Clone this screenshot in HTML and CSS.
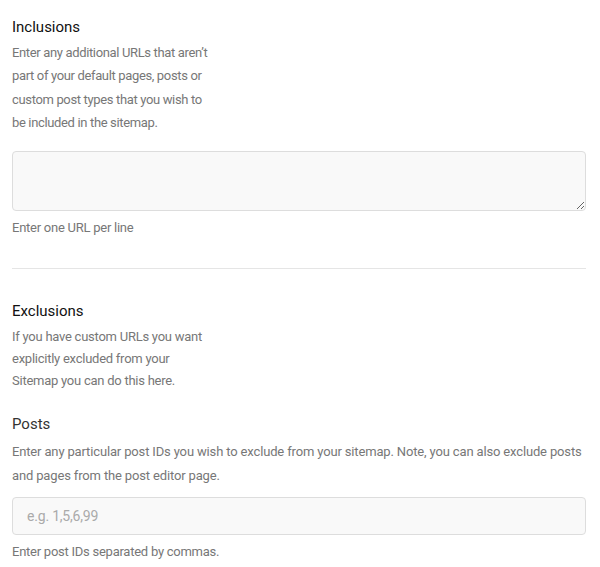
FILE: index.html
```html
<!DOCTYPE html>
<html>
<head>
<meta charset="utf-8">
<link rel="stylesheet" href="styles.css">
</head>
<body>
<div class="page">
  <section class="section">
    <h2 class="title">Inclusions</h2>
    <p class="desc desc-inc">Enter any additional URLs that aren’t part of your default pages, posts or custom post types that you wish to be included in the sitemap.</p>
    <textarea class="textarea"></textarea>
    <p class="help">Enter one URL per line</p>
  </section>
  <hr class="divider">
  <section class="section">
    <h2 class="title">Exclusions</h2>
    <p class="desc desc-exc">If you have custom URLs you want explicitly excluded from your Sitemap you can do this here.</p>
    <h3 class="subtitle">Posts</h3>
    <p class="desc desc-posts">Enter any particular post IDs you wish to exclude from your sitemap. Note, you can also exclude posts and pages from the post editor page.</p>
    <input class="input" type="text" placeholder="e.g. 1,5,6,99">
    <p class="help help-posts">Enter post IDs separated by commas.</p>
  </section>
</div>
</body>
</html>
```

FILE: styles.css
```css
html, body {
  margin: 0;
  padding: 0;
  background: #fff;
}
body {
  font-family: Roboto, "Liberation Sans", sans-serif;
  color: #777;
}
.page {
  padding: 15px 14px 0 12px;
}
.section {
  display: flex;
  flex-direction: column;
}
.title {
  margin: 0;
  font-size: 15px;
  font-weight: 400;
  color: #111;
  line-height: 24px;
}
.subtitle {
  margin: 20px 0 0;
  font-size: 15px;
  font-weight: 400;
  color: #333;
  line-height: 24px;
}
.desc {
  margin: 0;
  font-size: 13px;
  color: #777;
  letter-spacing: -0.25px;
}
.desc-inc {
  width: 200px;
  margin-top: 2px;
  line-height: 23.3px;
  letter-spacing: -0.35px;
}
.desc-exc {
  width: 200px;
  margin-top: 3px;
  line-height: 22px;
}
.desc-posts {
  margin-top: 4px;
  line-height: 24px;
  letter-spacing: -0.15px;
}
.textarea {
  margin-top: 17px;
  box-sizing: border-box;
  height: 60px;
  width: 100%;
  border: 1px solid #ddd;
  border-radius: 4px;
  background: #f9f9f9;
  resize: vertical;
}
.input {
  margin-top: 9px;
  box-sizing: border-box;
  height: 38px;
  width: 100%;
  border: 1px solid #ddd;
  border-radius: 4px;
  background: #f9f9f9;
  padding: 0 14px;
  font-family: Roboto, "Liberation Sans", sans-serif;
  font-size: 14px;
  letter-spacing: -0.2px;
}
.input::placeholder { color: #aaa; }
.help {
  margin: 7px 0 0;
  font-size: 13px;
  line-height: 20px;
  letter-spacing: -0.25px;
  color: #777;
}
.help-posts { margin-top: 7px; }
.divider {
  margin: 30px 0 30px;
  border: 0;
  border-top: 1px solid #e5e5e5;
}
```
